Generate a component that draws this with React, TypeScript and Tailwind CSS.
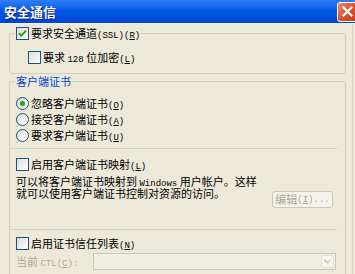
import React from 'react';

const cjk = "font-['Noto_Sans_CJK_SC',sans-serif]";
const mono = "font-['Liberation_Mono','Noto_Sans_CJK_SC',monospace] text-[9px] leading-[0px]";

function Lt({ children }: { children: React.ReactNode }) {
  return <span className={mono}>{children}</span>;
}

function CheckBox({ checked = false }: { checked?: boolean }) {
  return (
    <span className="w-[13px] h-[13px] shrink-0 border border-[#1C5180] bg-linear-to-br from-[#DCDCD7] to-white flex items-center justify-center">
      {checked && (
        <svg width="9" height="9" viewBox="0 0 9 9">
          <path d="M1 4.2 L3.4 6.6 L8 1.6" stroke="#21A121" strokeWidth="2" fill="none" />
        </svg>
      )}
    </span>
  );
}

function Radio({ checked = false }: { checked?: boolean }) {
  return (
    <span className="w-[13px] h-[13px] shrink-0 rounded-full border border-[#1C5180] bg-linear-to-br from-[#DCDCD7] to-white flex items-center justify-center">
      {checked && <span className="w-[5px] h-[5px] rounded-full bg-[#21A121]" />}
    </span>
  );
}

function Row({ children, className = '' }: { children: React.ReactNode; className?: string }) {
  return <div className={`h-[13px] flex items-center gap-[2px] ${className}`}>{children}</div>;
}

function Divider() {
  return <div className="w-[327px] border-t border-[#D0D0BF]" />;
}

export default function App() {
  return (
    <div className={`w-[355px] h-[274px] overflow-hidden bg-[#ECE9D8] flex flex-col text-[11px] leading-[13px] text-black ${cjk}`}>
      {/* Title bar */}
      <div className="h-[24px] shrink-0 flex items-center bg-linear-to-b from-[#2E7EF7] via-[#0056E6] to-[#0046D2] border-b border-[#F4F2EA]">
        <span className="pl-[4px] text-white font-bold text-[13px] [text-shadow:1px_1px_0_#0A1E6E]">安全通信</span>
        <button className="ml-auto mr-[-3px] w-[21px] h-[20px] rounded-[3px] border border-white bg-linear-to-br from-[#E88A6C] via-[#D9532F] to-[#C23C1A] flex items-center justify-center">
          <svg width="11" height="11" viewBox="0 0 11 11">
            <path d="M1.5 1.5 L9.5 9.5 M9.5 1.5 L1.5 9.5" stroke="white" strokeWidth="2.2" strokeLinecap="square" />
          </svg>
        </button>
      </div>

      <div className="flex-1 w-[353px] border-r border-[#D6D3C4] pl-[9px]">
        {/* SSL group */}
        <fieldset className="mt-[3px] w-[337px] border border-[#D0D0BF] rounded-[3px] pb-[9px]">
          <legend className="ml-[5px] px-[1px]">
            <Row>
              <CheckBox checked />
              <span>
                要求安全通道<Lt>(SSL)(<u>R</u>)</Lt>
              </span>
            </Row>
          </legend>
          <Row className="mt-[11px] pl-[18px]">
            <CheckBox />
            <span>
              要求 <Lt>128</Lt> 位加密<Lt>(<u>L</u>)</Lt>
            </span>
          </Row>
        </fieldset>

        {/* Client certificates */}
        <fieldset className="mt-[1px] w-[337px] h-[220px] border border-[#D0D0BF] rounded-[3px]">
          <legend className="ml-[5px] px-[1px] text-[#0046D5]">
            <Row>客户端证书</Row>
          </legend>
          <div className="mt-[9px] pl-[6px] flex flex-col gap-[3px]">
            <Row>
              <Radio checked />
              <span>忽略客户端证书<Lt>(<u>O</u>)</Lt></span>
            </Row>
            <Row>
              <Radio />
              <span>接受客户端证书<Lt>(<u>A</u>)</Lt></span>
            </Row>
            <Row>
              <Radio />
              <span>要求客户端证书<Lt>(<u>U</u>)</Lt></span>
            </Row>
          </div>

          <div className="mt-[6px]">
            <Divider />
          </div>

          <Row className="mt-[9px] pl-[6px]">
            <CheckBox />
            <span>启用客户端证书映射<Lt>(<u>L</u>)</Lt></span>
          </Row>

          <div className="mt-[4px] pl-[6px] flex items-start">
            <p className="w-[246px] leading-[12px]">
              可以将客户端证书映射到 <Lt>Windows</Lt> 用户帐户。这样就可以使用客户端证书控制对资源的访问。
            </p>
            <button className="ml-[10px] mt-[16px] w-[61px] h-[17px] rounded-[3px] border border-[#CBC8BA] bg-[#F3F2EB] text-[#ACA899] flex items-center justify-center">
              编辑<Lt>(<u>I</u>)...</Lt>
            </button>
          </div>

          <div className="mt-[21px]">
            <Divider />
          </div>

          <Row className="mt-[7px] pl-[6px]">
            <CheckBox />
            <span>启用证书信任列表<Lt>(<u>N</u>)</Lt></span>
          </Row>

          <div className="mt-[3px] pl-[6px] flex items-center text-[#ACA899]">
            <span className="w-[77px]">
              当前 <Lt>CTL(<u>C</u>):</Lt>
            </span>
            <div className="w-[243px] h-[17px] border border-[#C9C7BA] bg-[#F0EFE6] flex justify-end items-center pr-[1px]">
              <span className="w-[13px] h-[13px] rounded-[2px] bg-[#F7F6F0] border border-[#E2E0D6] flex items-center justify-center">
                <svg width="7" height="5" viewBox="0 0 7 5">
                  <path d="M0.5 0.8 L3.5 3.8 L6.5 0.8" stroke="#C4C2B8" strokeWidth="1.4" fill="none" />
                </svg>
              </span>
            </div>
          </div>
        </fieldset>
      </div>
    </div>
  );
}
